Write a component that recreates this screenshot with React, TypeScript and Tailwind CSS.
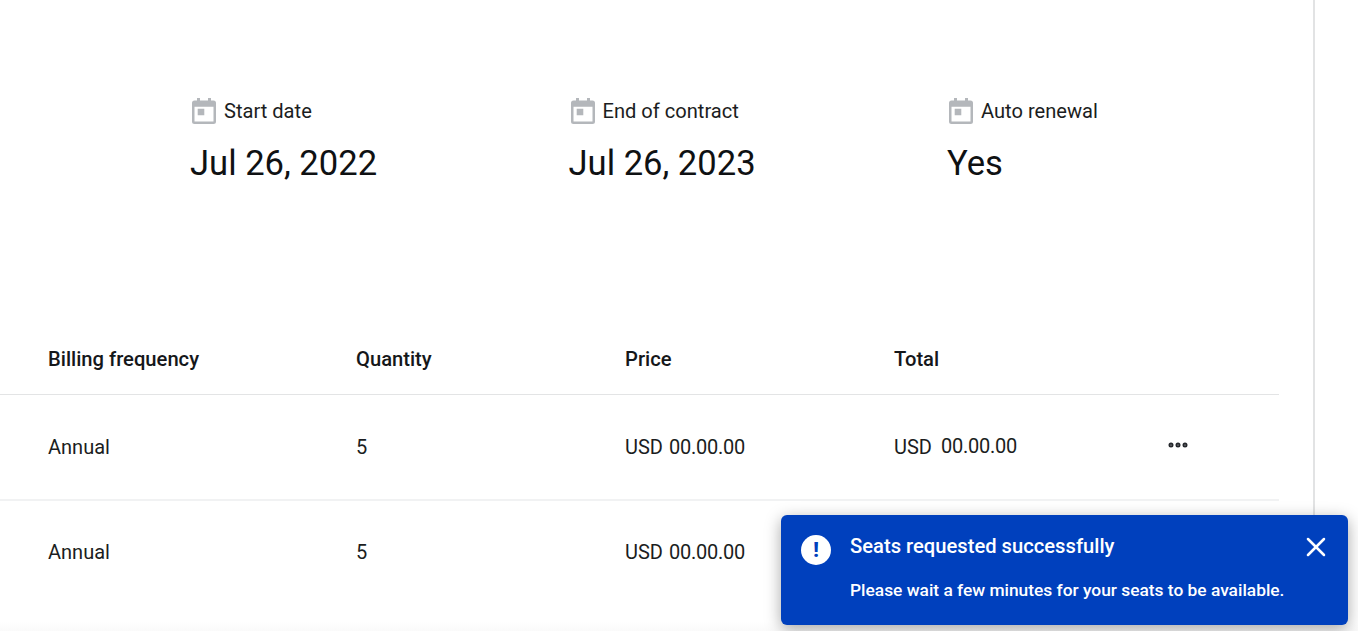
import { MoreHorizontal, X } from 'lucide-react'

function CalendarIcon() {
  return (
    <svg viewBox="0 0 24 26" className="h-[26px] w-[24px] fill-[#b4b7bb]">
      <path d="M5 0h3v2.500h8V0h3v2.500h2.500A2.500 2.500 0 0 1 24 5v18.500a2.500 2.500 0 0 1-2.500 2.500h-19A2.500 2.500 0 0 1 0 23.500V5a2.500 2.500 0 0 1 2.500-2.500H5V0Zm-2.500 8.700v14.800h19V8.700h-19Zm3.200 2h6.600v6.600H5.700v-6.600Z" fillRule="evenodd" />
    </svg>
  )
}

const stats = [
  { label: 'Start date', value: 'Jul 26, 2022' },
  { label: 'End of contract', value: 'Jul 26, 2023' },
  { label: 'Auto renewal', value: 'Yes' },
]

function Row({ first }: { first?: boolean }) {
  return (
    <div className={`grid grid-cols-[356px_269px_269px_273px_1fr] items-center text-[20px] text-[#1b1d21] ${first ? 'h-[106px] border-b-2 border-[#f1f2f3]' : 'h-[101px]'}`}>
      <div className="pl-12">Annual</div>
      <div>5</div>
      <div className="flex items-center gap-[6px]">
        <span>USD</span>
        <span className="tracking-[-0.25px]">00.00.00</span>
      </div>
      {first && (
        <div className="flex items-center gap-[9px]">
          <span>USD</span>
          <span className="-translate-y-px tracking-[-0.25px]">00.00.00</span>
        </div>
      )}
      {first && (
        <div>
          <MoreHorizontal className="h-[24px] w-[24px] -translate-x-[1px] -translate-y-[2px] text-[#24272c]" strokeWidth={3} />
        </div>
      )}
    </div>
  )
}

export default function App() {
  return (
    <div className="relative h-[631px] w-[1358px] overflow-hidden bg-white font-['Roboto',sans-serif]">
      <div className="h-full w-[1315px] border-r-2 border-[#e2e3e4] pr-[34px]">
        <div className="grid grid-cols-[378.500px_378.500px_1fr] pl-[190px] pt-[97px]">
          {stats.map((s) => (
            <div key={s.label}>
              <div className="flex h-[28px] items-center gap-[8px] pl-[2px] text-[20.100px] text-[#1b1d21]">
                <CalendarIcon />
                <span>{s.label}</span>
              </div>
              <div className="mt-[14px] text-[34.600px] leading-[48px] text-[#0f1113]">{s.value}</div>
            </div>
          ))}
        </div>

        <div className="mt-[139px]">
          <div className="grid h-[69px] grid-cols-[356px_269px_269px_1fr] items-center border-b border-[#e3e4e5] pb-[2px] text-[20.200px] font-medium text-[#15171a]">
            <div className="pl-12">Billing frequency</div>
            <div>Quantity</div>
            <div>Price</div>
            <div>Total</div>
          </div>
          <Row first />
          <Row />
        </div>
      </div>

      <div className="absolute bottom-0 left-0 h-[10px] w-full bg-gradient-to-b from-white to-[#fafafa]" />

      <div className="absolute left-[781px] top-[515px] flex h-[110px] w-[567px] rounded-[6px] bg-[#0040bd] pl-5 pr-[22px] pt-[20px] text-white shadow-[0_4px_16px_rgba(0,0,0,0.35)]">
        <div className="flex h-[30px] w-[30px] shrink-0 items-center justify-center rounded-full bg-white text-[20px] font-black leading-none text-[#0040bd]">!</div>
        <div className="ml-[19px] flex-1">
          <div className="-translate-y-px text-[20.200px] font-medium leading-[24px]">Seats requested successfully</div>
          <div className="mt-[20px] text-[17.350px] font-medium leading-[22px]">Please wait a few minutes for your seats to be available.</div>
        </div>
        <X className="mt-[-4px] h-[32px] w-[32px] shrink-0 translate-x-[6px]" strokeWidth={1.9} />
      </div>
    </div>
  )
}
